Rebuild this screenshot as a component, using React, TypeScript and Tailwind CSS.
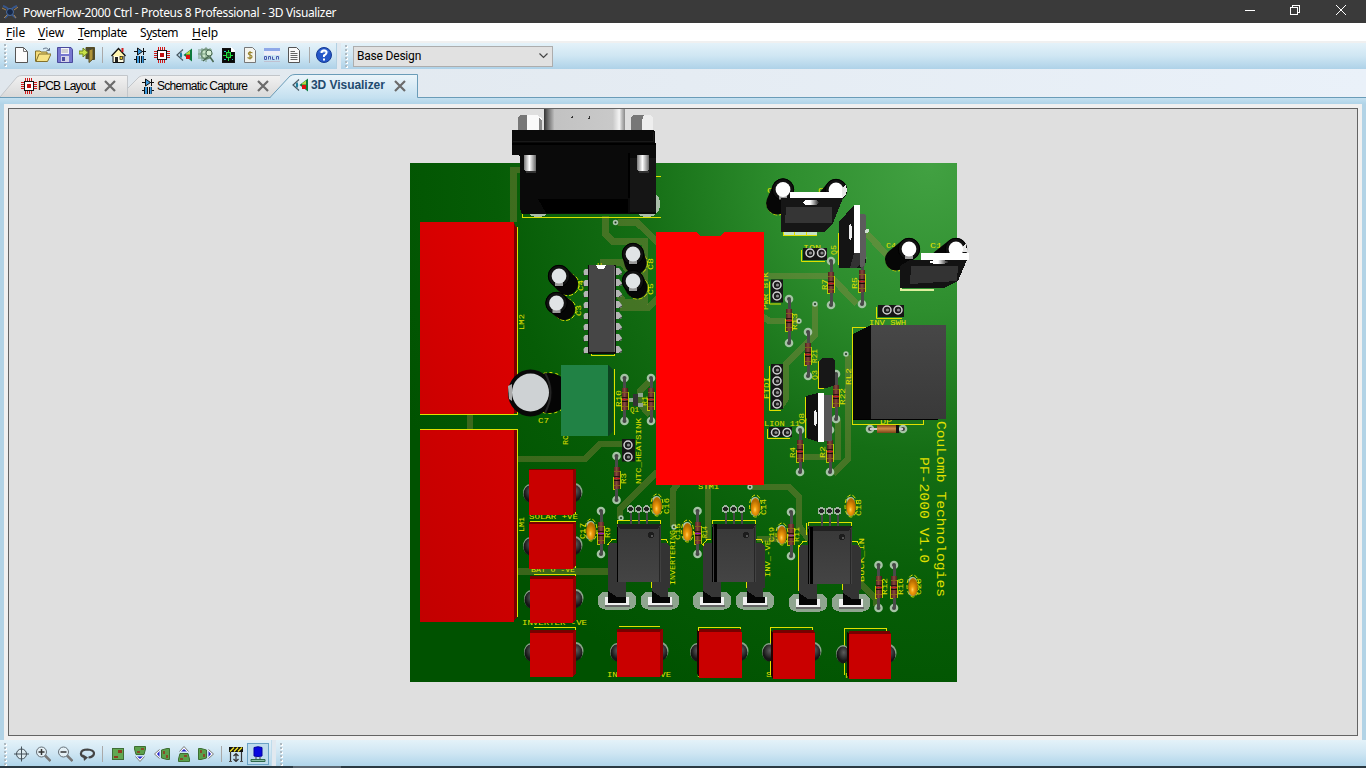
import React from "react";

const SILK = "#e0e000";

/* ---------- board primitives ---------- */

function T({ x, y, len, s = 7.5, r = -90, children }: { x: number; y: number; len: number; s?: number; r?: number; children: string }) {
  return (
    <text
      transform={`translate(${x} ${y}) rotate(${r})`}
      fontSize={s}
      textLength={len}
      lengthAdjust="spacingAndGlyphs"
      fill={SILK}
      fontFamily='"Liberation Mono", monospace'
    >
      {children}
    </text>
  );
}

function Pad({ x, y }: { x: number; y: number }) {
  return (
    <g shapeRendering="auto">
      <circle cx={x} cy={y} r={4.3} fill="#a5c3a5" />
      <circle cx={x} cy={y} r={2} fill="#444" />
    </g>
  );
}

function Resistor({ x, a, b, c, d, band = "#c81c1c" }: { x: number; a: number; b: number; c: number; d: number; band?: string }) {
  return (
    <g>
      <path d={`M${x - 3.5} ${c + 10}V${d}H${x + 1}M${x + 3.5} ${c + 4}V${d}`} stroke={SILK} strokeOpacity={0.8} fill="none" />
      <Pad x={x} y={a} />
      <Pad x={x} y={b} />
      <rect x={x - 1.5} y={a} width={3} height={b - a} fill="#4a4a4a" />
      <rect x={x - 3} y={c} width={6} height={d - c} fill="url(#res)" />
      <rect x={x - 3} y={c + 4} width={6} height={1} fill="#80601c" />
      <rect x={x - 3} y={c + 9} width={6} height={1} fill="#2a1010" />
      <rect x={x - 3} y={c + 11} width={6} height={1} fill={band} />
      <rect x={x - 3} y={c + 13} width={6} height={1} fill="#1c0a0a" />
      <rect x={x - 3} y={d - 4} width={6} height={1} fill="#80601c" />
    </g>
  );
}

function Electro({ x, y, bx, by, top = "#e0e4e6" }: { x: number; y: number; bx: number; by: number; top?: string }) {
  return (
    <g>
      <circle cx={bx + 1} cy={by + 0.5} r={11} fill="none" stroke={SILK} strokeDasharray="4 2" />
      <path d={`M${x} ${y}L${bx} ${by}`} stroke="#060606" strokeWidth={22} strokeLinecap="round" />
      <circle cx={x} cy={y} r={10.7} fill="#111" stroke="#000" />
      <rect x={x - 4} y={y + 6} width={8} height={4} fill="#999" />
      <circle cx={x} cy={y} r={7.4} fill={top} />
    </g>
  );
}

function Pin({ x, y }: { x: number; y: number }) {
  return (
    <g>
      <circle cx={x} cy={y} r={4} fill="#1c1c1c" stroke="#d4d4d4" strokeWidth={1.5} />
      <circle cx={x + 0.5} cy={y} r={1.6} fill="#8d8d8d" />
    </g>
  );
}

function Header({ x, y, w, h, pins, silk = true }: { x: number; y: number; w: number; h: number; pins: number[][]; silk?: boolean }) {
  return (
    <g>
      {silk && <path d={`M${x - 1.5} ${y + 2}V${y + h + 1.5}H${x + w - 2}`} stroke={SILK} fill="none" />}
      <rect x={x} y={y} width={w} height={h} fill="#161616" />
      {pins.map((p) => (
        <Pin key={p.join()} x={p[0]} y={p[1]} />
      ))}
    </g>
  );
}

function Disc({ x, y }: { x: number; y: number }) {
  return (
    <g>
      <ellipse cx={x} cy={y - 1} rx={6} ry={11} fill="none" stroke={SILK} strokeDasharray="4 2" />
      <circle cx={x - 0.5} cy={y - 6} r={4} fill="#a9c4a9" />
      <circle cx={x - 0.5} cy={y + 5} r={4} fill="#8fb08f" />
      <ellipse cx={x} cy={y} rx={4.8} ry={9} fill="url(#disc)" />
    </g>
  );
}

function Mosfet({ dx, dy }: { dx: number; dy: number }) {
  return (
    <g transform={`translate(${dx} ${dy})`}>
      <rect x={598} y={592} width={38} height={17.5} rx={7} fill="#8fa58f" />
      <rect x={641} y={592} width={38} height={17.5} rx={7} fill="#8fa58f" />
      <rect x={605} y={597} width={24} height={8.5} fill="#f0f0f0" />
      <rect x={648} y={597} width={24} height={8.5} fill="#f0f0f0" />
      <path d="M605 605.5H630M648 605.5H673" stroke="#666" strokeWidth={2} />
      <path d="M617 524V520.500H660.500V524M607.500 545L612 539.500H616M661 539.500H666L668 543M651.500 582V588M608.500 583V588" stroke={SILK} fill="none" />
      {[631, 639, 647].map((x) => (
        <g key={x}>
          <path d={`M${x} 509V524`} stroke="#474747" strokeWidth={2.500} />
          <circle cx={x - 0.5} cy={509} r={3} fill="#222" stroke="#a0b4a0" strokeWidth={1.500} />
        </g>
      ))}
      <path d="M608 547L610 543H617V582H626V603H608Z" fill="#363636" />
      <path d="M661 543H667L669.500 546V588H668V603H652V582H661Z" fill="#333" />
      <path d="M608 591L617 597H626V603H608ZM652 591L661 597H670V603H652Z" fill="#050505" />
      <rect x={617} y={524} width={44} height={58} fill="url(#mos)" />
      <path d="M617 524H661L658 529H620Z" fill="#202020" />
      <path d="M617.500 527V582" stroke="#000" strokeWidth={1.500} />
      <path d="M659 527V582" stroke="#262626" />
      <circle cx={651} cy={535} r={3} fill="#1c1c1c" />
      <circle cx={652} cy={536} r={1.300} fill="#555" />
    </g>
  );
}

function RedBox({ x, y, w, h, lb, rb, cy, silk, top = 3, side = "r" }: { x: number; y: number; w: number; h: number; lb: number; rb: number; cy: number; silk: string; top?: number; side?: string }) {
  return (
    <g>
      <path d={silk} stroke={SILK} fill="none" />
      <g shapeRendering="auto">
        <ellipse cx={lb} cy={cy - 1} rx={7} ry={9} fill="#8ca58c" />
        <ellipse cx={rb} cy={cy - 2} rx={7.500} ry={9} fill="#8ca58c" />
        <ellipse cx={lb} cy={cy} rx={6.500} ry={8.500} fill="url(#ball)" />
        <ellipse cx={rb - 0.500} cy={cy - 0.500} rx={7} ry={8.500} fill="url(#ball)" />
      </g>
      {side === "r" ? (
        <path d={`M${x + w} ${y}L${x + w + 2.5} ${y - top}V${y + h - 3}L${x + w} ${y + h}Z`} fill="#8e0000" />
      ) : (
        <path d={`M${x} ${y}L${x - 2} ${y - top}V${y + h - 4}L${x} ${y + h}Z`} fill="#250000" />
      )}
      <path d={`M${x} ${y}V${y - top}H${x + w + (side === "r" ? 2 : -1)}L${x + w} ${y}Z`} fill="#780000" />
      <rect x={x} y={y} width={w} height={h} fill="#c90000" />
    </g>
  );
}

function Via({ x, y }: { x: number; y: number }) {
  return (
    <g shapeRendering="auto">
      <circle cx={x} cy={y} r={2.7} fill="#a9c4a9" />
      <circle cx={x} cy={y} r={1} fill="#163016" />
    </g>
  );
}

function Board() {
  return (
    <svg viewBox="9 109 1348 626" width="1348" height="626" className="block" shapeRendering="crispEdges">
      <defs>
        <radialGradient id="pcb" gradientUnits="userSpaceOnUse" cx="930" cy="165" r="580">
          <stop offset="0" stopColor="#42a142" />
          <stop offset=".25" stopColor="#2e8e2e" />
          <stop offset=".5" stopColor="#156e15" />
          <stop offset=".75" stopColor="#065c06" />
          <stop offset="1" stopColor="#005200" />
        </radialGradient>
        <linearGradient id="redA" x1="0" y1="1" x2="1" y2="0">
          <stop offset="0" stopColor="#cb0000" />
          <stop offset="1" stopColor="#e20000" />
        </linearGradient>
        <linearGradient id="redB" x1="0" y1="1" x2="1" y2="0">
          <stop offset="0" stopColor="#c20000" />
          <stop offset="1" stopColor="#d40000" />
        </linearGradient>
        <linearGradient id="res">
          <stop offset="0" stopColor="#4c1f1b" />
          <stop offset=".5" stopColor="#8a4840" />
          <stop offset="1" stopColor="#4c1f1b" />
        </linearGradient>
        <radialGradient id="disc" cx=".45" cy=".65">
          <stop offset="0" stopColor="#ffd060" />
          <stop offset=".35" stopColor="#f09c0c" />
          <stop offset="1" stopColor="#b86c00" />
        </radialGradient>
        <radialGradient id="ball" cx=".55" cy=".35">
          <stop offset="0" stopColor="#5c5c5c" />
          <stop offset="1" stopColor="#161616" />
        </radialGradient>
        <linearGradient id="mos" x1="0" y1="0" x2="0" y2="1">
          <stop offset="0" stopColor="#383838" />
          <stop offset="1" stopColor="#444444" />
        </linearGradient>
        <linearGradient id="shell">
          <stop offset="0" stopColor="#333" />
          <stop offset=".06" stopColor="#777" />
          <stop offset=".13" stopColor="#c2c2c2" />
          <stop offset=".85" stopColor="#c9c9c9" />
          <stop offset=".93" stopColor="#f4f4f4" />
          <stop offset=".96" stopColor="#c0c0c0" />
          <stop offset="1" stopColor="#8a8a8a" />
        </linearGradient>
        <linearGradient id="screw">
          <stop offset="0" stopColor="#777" />
          <stop offset=".45" stopColor="#fff" />
          <stop offset="1" stopColor="#666" />
        </linearGradient>
        <linearGradient id="hole">
          <stop offset="0" stopColor="#fff" />
          <stop offset=".45" stopColor="#fff" />
          <stop offset="1" stopColor="#222" />
        </linearGradient>
        <linearGradient id="relay" x1="0" y1="0" x2="0" y2="1">
          <stop offset="0" stopColor="#474747" />
          <stop offset="1" stopColor="#393939" />
        </linearGradient>
        <linearGradient id="diode" x1="0" y1="0" x2="0" y2="1">
          <stop offset="0" stopColor="#7a4418" />
          <stop offset=".45" stopColor="#d08a48" />
          <stop offset="1" stopColor="#7a4418" />
        </linearGradient>
      </defs>

      <rect x={410} y={163} width={547} height={519} fill="url(#pcb)" />

      {/* copper traces */}
      <g stroke="#a08848" strokeOpacity={0.36} strokeWidth={6.5} fill="none">
        <path d="M513.500 222V170H522" />
        <path d="M605.500 216V234L613 241.500H645V302H624L618 294" />
        <path d="M618 222.500H637L658 243" />
        <path d="M600 262.500H622L628 270" />
        <path d="M620 308H648L658 298" />
        <path d="M764 276H830L857 304" />
        <path d="M866 233L887 255" />
        <path d="M815 304V335L786 364V398L780 407" />
        <path d="M762 316L769 321H800" />
        <path d="M848 355V459L833 474" />
        <path d="M798 457H838V420" />
        <path d="M517 459H585L600 444H625" />
        <path d="M657 472L620 509V519" />
        <path d="M517 571.500H609" />
        <path d="M682 478L673 490V527M708 485V540" />
        <path d="M752 487H789L799 497V526L809 540" />
        <path d="M757 539H784" />
        <path d="M860 583L876 599V606" />
        <path d="M650 381L640 391V404L650 415" />
        <path d="M470 415V430" />
      </g>
      <Via x={615.5} y={222.5} />
      <Via x={815} y={304} />
      <Via x={799} y={321} />
      <Via x={846} y={354} />
      <Via x={750} y={487} />
      <Via x={621} y={518} />
      <Via x={674} y={527} />

      {/* silkscreen outlines */}
      <path
        d="M522.500 214V217.500H661M656 176.500H661M514 227.500H517.500V414.500H420M420 429.500H517.500V616.500H514M852.500 327.500H873M852.500 327V424.500H923.500V418M591 354V355.500H614V354M614.500 369V435M818.500 361V388.500H824M838.500 233V265M805.500 397V438M806.500 523V535M798.500 545V590.500H803M703.500 545V588.500H708"
        stroke={SILK}
        fill="none"
      />
      <g shapeRendering="auto">
        <T x={524} y={330} len={16}>LM2</T>
        <T x={524} y={532} len={15}>LM1</T>
        <T x={653} y={270} len={12}>C8</T>
        <T x={653} y={295} len={12}>C5</T>
        <T x={583} y={291} len={11}>C4</T>
        <T x={581} y={316} len={11}>C3</T>
        <T x={538} y={422.5} len={11} r={0}>C7</T>
        <T x={568} y={445} len={10}>RC</T>
        <T x={621} y={407} len={17}>R10</T>
        <T x={630} y={411.5} len={9} r={0}>Q1</T>
        <T x={647} y={406} len={10}>R1</T>
        <T x={641} y={484} len={66}>NTC_HEATSINK</T>
        <T x={626} y={484} len={11}>R3</T>
        <T x={669} y={514} len={16}>C16</T>
        <T x={610} y={538} len={11}>R9</T>
        <T x={585} y={539} len={16}>C17</T>
        <T x={675} y={585} len={55}>INVERTERING</T>
        <T x={680} y={540} len={17}>C15</T>
        <T x={707} y={538} len={12}>R14</T>
        <T x={698} y={489} len={21} r={0}>STM1</T>
        <T x={529} y={518.5} len={49} r={0}>SOLAR +VE</T>
        <T x={531} y={571.5} len={44} r={0}>BAT O -VE</T>
        <T x={522} y={624.5} len={65} r={0}>INVERTER -VE</T>
        <T x={607} y={676.5} len={64} r={0}>INVERTER -VE</T>
        <T x={697} y={676.5} len={6} r={0}>S</T>
        <T x={766} y={677} len={6} r={0}>S</T>
        <T x={845} y={677.5} len={6} r={0}>F</T>
        <T x={766} y={515} len={16}>C14</T>
        <T x={774} y={542} len={15}>C19</T>
        <T x={799} y={542} len={15}>R11</T>
        <T x={861} y={516} len={17}>C18</T>
        <T x={887} y={595} len={17}>R12</T>
        <T x={903} y={595} len={17}>R16</T>
        <T x={921} y={595} len={17}>C20</T>
        <T x={864} y={582} len={44}>BUCK_IN</T>
        <T x={770} y={577} len={37}>INV_-VE</T>
        <T x={857} y={289} len={12}>R5</T>
        <T x={827} y={290} len={11}>R7</T>
        <T x={836} y={255} len={10}>Q5</T>
        <T x={803} y={250} len={18} r={0}>ION</T>
        <T x={797} y={330} len={17}>R13</T>
        <T x={817} y={363} len={14}>R21</T>
        <T x={817} y={380} len={10}>Q3</T>
        <T x={845} y={405} len={17}>R22</T>
        <T x={851} y={385} len={17}>RL2</T>
        <T x={804} y={424} len={11}>Q8</T>
        <T x={795} y={458} len={11}>R4</T>
        <T x={825} y={458} len={12}>R2</T>
        <T x={769} y={399} len={22}>FTDI</T>
        <T x={768} y={310} len={38}>PWR BTK</T>
        <T x={869} y={325} len={37} r={0}>INV SWH</T>
        <T x={880} y={424} len={12} r={0}>DP</T>
        <T x={764} y={425.5} len={36} r={0}>LION 11</T>
        <T x={886} y={248} len={10} r={0}>C4</T>
        <T x={930} y={248} len={12} r={0}>C1</T>
        <T x={767} y={193} len={6} r={0}>C</T>
        <T x={818} y={193} len={6} r={0}>C</T>
        <T x={597} y={268} len={5} r={0}>U</T>
        <T x={937} y={421} len={176} s={12.5} r={90}>CouLomb Technologies</T>
        <T x={919.500} y={457} len={106} s={12.5} r={90}>PF-2000 V1.0</T>
      </g>

      {/* D-sub connector */}
      <ellipse cx={656} cy={204} rx={4} ry={9} fill="#a9bda9" />
      <ellipse cx={538} cy={214} rx={8} ry={3} fill="#a9bda9" />
      <ellipse cx={647} cy={214} rx={8} ry={3} fill="#a9bda9" />
      <rect x={544} y={109} width={81} height={22} fill="url(#shell)" />
      <path d="M571 117h1v-1M588 118h1v-2" stroke="#333" fill="none" />
      <path d="M518 117L521 115H527V130H518Z" fill="#777" />
      <path d="M527 115H537L542 118V130H527Z" fill="#fafafa" />
      <path d="M539 118L542 120V130H539Z" fill="#888" />
      <path d="M631 117L634 115H644L642 120V130H631Z" fill="#777" />
      <path d="M644 115H650L653 117V130H642V120Z" fill="#eee" />
      <path d="M512 130H654L655 132V143H656V214H522L520 208V157L519 155H512Z" fill="#0a0a0a" />
      <path d="M512 143.500H656" stroke="#000" strokeWidth={2} />
      <path d="M513 141H653V132" stroke="#191919" fill="none" />
      <rect x={630} y={158} width={26} height={54} fill="#151515" />
      <path d="M538 199H628V213H546Z" fill="#000" />
      <path d="M628.500 153V198" stroke="#000" strokeWidth={2} />
      <path d="M524 155H536V171L533 172H526L524 169Z" fill="url(#screw)" />
      <path d="M637 155H649V170L646 172H639L637 169Z" fill="url(#screw)" />
      <path d="M526 171.500H536M639 171.500H649" stroke="#333" strokeWidth={2} />

      {/* relay bodies on the left */}
      <path d="M513 222L516.500 227V413H513Z" fill="#7c0000" />
      <rect x={420} y={222} width={94} height={191.500} fill="url(#redA)" />
      <path d="M513 430H517V617L513 621Z" fill="#7c0000" />
      <rect x={420} y={430} width={94} height={191.500} fill="url(#redB)" />

      {/* DIP package */}
      {[272, 283, 294, 305, 316, 327, 338, 350].map((y) => (
        <g key={y} shapeRendering="auto">
          <path d={`M583.500 ${y - 1}L585 ${y - 3}H588V${y + 3}H584Z`} fill="#b5b5b5" />
          <path d={`M616 ${y - 4}H619L622 ${y}V${y + 2}L620 ${y + 3}H616Z`} fill="#b5b5b5" />
          <path d={`M583 ${y + 2}L585 ${y + 4}M619 ${y + 3}L622 ${y + 1}`} stroke="#333" />
        </g>
      ))}
      <rect x={588} y={265} width={28} height={89} fill="#0c0c0c" />
      <rect x={589} y={265} width={25} height={87} fill="#464646" />
      <path d="M614.500 266V352" stroke="#6a6a6a" />
      <path d="M596 265H606L604 269H598Z" fill="#fff" />

      <g shapeRendering="auto">
        <Electro x={633} y={254} bx={635.500} by={263} />
        <Electro x={633} y={281} bx={636.500} by={287.500} />
        <Electro x={559} y={276} bx={567} by={284} />
        <Electro x={556.500} y={303} bx={564} by={309} />
        <Electro x={783} y={189.500} bx={777} by={203.500} top="#fff" />
        <Electro x={836} y={190} bx={825} by={203} top="#fff" />
        <Electro x={909} y={249} bx={896} by={259.500} top="#fff" />
        <Electro x={956} y={249} bx={942} by={260} top="#fff" />
        <circle cx={549} cy={393} r={20} fill="#050505" />
        <circle cx={549.5} cy={393} r={20.5} fill="none" stroke={SILK} strokeDasharray="3 3" />
        <ellipse cx={530.500} cy={393} rx={22.500} ry={23.500} fill="#080808" />
        <path d="M545 373Q556 392 545 413" stroke="#252525" strokeWidth={2} fill="none" />
        <path d="M508 386L512 384V401L509 399Z" fill="#aaa" />
        <ellipse cx={530.500} cy={392.500} rx={18.500} ry={19} fill="#ced2d4" />
      </g>

      {/* green terminal */}
      <path d="M608 365L613 370V432L608 436Z" fill="#0c4420" />
      <rect x={561} y={365} width={47} height={71} fill="#218245" />

      {/* voltage regulators */}
      <rect x={784} y={232} width={33} height={3} fill="#c4e4c4" />
      <path d="M783.500 231V235.500H817M794.500 232V235M806.500 232V235" stroke={SILK} fill="none" />
      <path d="M781 198H843L833 223L825 232H781Z" fill="#161616" />
      <path d="M786 207H832V223H785Z" fill="#353535" />
      <rect x={790} y={192} width={52} height={6} fill="#fff" />
      <path d="M842 188L846 184L847 191L845 196L842 198Z" fill="#e8e8e8" />
      <ellipse cx={811} cy={202.500} rx={8} ry={2.800} fill="url(#hole)" />
      <path d="M900.500 286V289.500H934" stroke="#dff0a0" strokeWidth={2} fill="none" />
      <path d="M900 266L910 260H967L958 281L944 288H900Z" fill="#131313" />
      <path d="M911 266H958L957 281L910 284Z" fill="#333" />
      <rect x={921} y={253} width={48} height={7} fill="#fff" />
      <path d="M963 246L966 244L967 252H963Z" fill="#e8e8e8" />
      <ellipse cx={939} cy={262} rx={9} ry={2} fill="url(#hole)" />

      {/* resistors */}
      <Resistor x={831} a={261} b={305} c={272} d={293} />
      <Resistor x={862} a={258} b={304} c={270} d={292} />
      <Resistor x={789} a={299} b={343} c={309} d={331} />
      <Resistor x={808} a={332} b={376} c={343} d={365} />
      <Resistor x={836} a={374} b={419} c={385} d={407} />
      <Resistor x={800} a={430} b={472} c={440} d={462} />
      <Resistor x={830} a={430} b={472} c={440} d={462} />
      <Resistor x={624.500} a={378} b={421} c={388} d={410} />
      <Resistor x={651} a={378} b={421} c={388} d={410} />
      <Resistor x={616.500} a={456} b={500} c={467} d={489} />
      <Resistor x={601} a={511} b={554} c={522} d={544} band="#9a18c0" />
      <Resistor x={697.500} a={511} b={554} c={522} d={544} band="#9a18c0" />
      <Resistor x={791} a={512} b={556} c={524} d={545} band="#9a4890" />
      <Resistor x={878.500} a={565} b={608} c={576} d={598} />
      <Resistor x={894} a={565} b={608} c={576} d={598} />
      <Pad x={870} y={429} />
      <Pad x={903} y={429} />
      <path d="M870 429H903" stroke="#ccc" strokeWidth={2} />
      <rect x={877} y={425} width={22} height={8} fill="url(#diode)" />
      <rect x={896} y={425} width={3} height={8} fill="#111" />

      {/* standing transistors */}
      <path d="M839 222L854 205H860V214L866 216V262L861 268H839Z" fill="#141414" />
      <path d="M860 214H864L866 216V252L865 266L860 267Z" fill="#5c5c5c" />
      <path d="M854 253H860V264L856 268H850Z" fill="#333" />
      <rect x={854} y={205} width={6} height={48} fill="#fff" />
      <ellipse cx={850.500} cy={232} rx={1.800} ry={8} fill="#eee" />
      <circle cx={867} cy={231} r={2} fill="#cfe0cf" />
      <path d="M806 396L818 393V442L807 438Z" fill="#101010" />
      <rect x={824} y={395} width={8} height={46} fill="#555" />
      <rect x={818} y={393} width={6} height={49} fill="#fff" />
      <ellipse cx={815.500} cy={418} rx={1.800} ry={8} fill="#eee" />
      <path d="M819 361L822 358H833L835 361V385L826 388H819Z" fill="#171717" />
      <path d="M638 393H643V397H638ZM638 403H643V407H638ZM629 398H633V402H629Z" fill="#8fa58f" />
      <rect x={633} y={394} width={5} height={12} fill="#333" />

      {/* relay */}
      <path d="M853 334L871 325V420H853Z" fill="#070707" />
      <rect x={871} y={325} width={75} height={94} fill="url(#relay)" />
      <path d="M853 419.500H938" stroke="#000" />

      {/* pin headers */}
      <g shapeRendering="auto">
        <Header x={803} y={248} w={24} h={12} pins={[[810, 253], [821.5, 253]]} />
        <Header x={771} y={279.500} w={12} h={23} pins={[[777, 285], [777, 296]]} />
        <Header x={771} y={364} w={12} h={45} pins={[[777, 370], [777, 381], [777, 392.5], [777, 404]]} />
        <Header x={878} y={305} w={26} h={12} pins={[[887, 310], [898, 310]]} />
        <Header x={769} y={427} w={23} h={10} pins={[[775.5, 432.5], [787, 432.5]]} />
        <Header x={622} y={439} w={13} h={22.500} pins={[[628, 445], [628, 457]]} silk={false} />
        <Disc x={657} y={506} />
        <Disc x={591} y={531} />
        <Disc x={687.500} y={532} />
        <Disc x={755.500} y={507} />
        <Disc x={782} y={535} />
        <Disc x={851} y={507} />
        <Disc x={913} y={587} />
      </g>

      <path d="M656 232H696L700 236H720L724 232H763.500V485H656Z" fill="#ff0000" />

      <Mosfet dx={0} dy={0} />
      <Mosfet dx={95} dy={0} />
      <Mosfet dx={191} dy={2} />
      <path d="M715 524V582M811.500 527V584" stroke="#000" strokeWidth={3} />

      <g>
        <RedBox x={529} y={470} w={44} h={45} lb={530} rb={575} cy={494} top={1} silk="M529 469.500H575.500V514" />
        <RedBox x={529} y={524} w={44} h={45} lb={530} rb={575} cy={547} top={2} silk="M530 521.500H575.500V568" />
        <RedBox x={530} y={579} w={43} h={44} lb={531} rb={576} cy={600} silk="M534 574.500H575.500V620" />
        <RedBox x={530} y={633} w={43} h={44} lb={531} rb={576} cy={653} silk="M534 627.500H575.500V672" />
        <RedBox x={617} y={632} w={43} h={45} lb={617} rb={661} cy={653} silk="M619 626.500H660" />
        <RedBox x={699} y={632} w={42.500} h={45.500} lb={697} rb={741} cy={653} silk="M698.500 650V627.500H740V632" side="n" />
        <RedBox x={773} y={633} w={42} h={46} lb={769} rb={814} cy={653} silk="M770.500 675V627.500H812V631" side="l" />
        <RedBox x={849} y={634} w={42} h={45} lb={843} rb={889} cy={655} silk="M844.500 675V628.500H886V632" side="l" />
      </g>
    </svg>
  );
}

/* ---------- icons ---------- */

function Ico({ children }: { children: React.ReactNode }) {
  return (
    <span className="flex h-[22px] w-[22px] items-center justify-center">
      <svg width="16" height="16" viewBox="0 0 16 16" fill="none" className="block">
        {children}
      </svg>
    </span>
  );
}

const schematic = (
  <g>
    <path d="M2 4.500H14M2 12.500H5M11 12.500H14" stroke="#111" shapeRendering="crispEdges" />
    <path d="M5.500 1V8L10.500 4.500Z" fill="#3a9ae0" stroke="#111" />
    <path d="M11.500 1V8M4.500 9V16M11.500 9V16" stroke="#111" shapeRendering="crispEdges" />
    <rect x="5" y="9" width="2" height="7" fill="#3a9ae0" />
    <path d="M7.500 9V16M9.500 9V16" stroke="#111" shapeRendering="crispEdges" />
    <rect x="10" y="9" width="1.500" height="7" fill="#3a9ae0" />
  </g>
);
const chip = (
  <g shapeRendering="crispEdges">
    <path d="M4.500 0V16M6.500 0V16M8.500 0V16M10.500 0V16M0 4.500H16M0 6.500H16M0 8.500H16M0 10.500H16" stroke="#d01818" />
    <rect x="3.500" y="3.500" width="9" height="9" fill="#fff" stroke="#111" />
    <rect x="6" y="6" width="4" height="4" fill="#c01010" />
  </g>
);
const visual = (
  <g>
    <path d="M7 2.500L1 8L7 13.500" stroke="#44545e" strokeWidth="1.200" />
    <path d="M5.500 3.500Q3.500 8 5.500 12.500" stroke="#7b8d98" />
    <ellipse cx="5" cy="8" rx="1.200" ry="2.500" fill="#1d7d9c" />
    <path d="M7.500 8L16 1.500V14.500Z" fill="#0d7a3c" />
    <path d="M10 6.500L14 3.500V7.500H10Z" fill="#b8d840" />
    <rect x="10" y="8" width="4" height="4" fill="#e01010" />
  </g>
);

const Sep = () => (
  <span className="flex h-[22px] w-[9px] items-center justify-center">
    <span className="h-4 w-px bg-[#a9a9a9]" />
  </span>
);

function Grip() {
  return (
    <span className="flex h-[24px] w-[10px] flex-col items-center justify-between py-[1px]">
      {[0, 1, 2, 3, 4, 5].map((i) => (
        <span key={i} className="h-[2px] w-[2px] bg-[#aebac1] shadow-[1px_1px_0_#fff]" />
      ))}
    </span>
  );
}

function TopTools() {
  return (
    <div className="flex h-[26px] items-center bg-linear-to-b from-[#e4f2f9] via-[#cfe6f3] to-[#aed2e8]">
      <div className="flex h-[26px] items-center pb-[2px]">
        <Grip />
        <Ico>
          <path d="M2.500 .5H10.500L14.500 4.500V15.500H2.500Z" fill="#fcfcfc" stroke="#555" />
          <path d="M10.500 .5V4.500H14.500" stroke="#777" />
        </Ico>
        <Ico>
          <path d="M.5 14.500V4H5L6 5H12V7" fill="#f5dc78" stroke="#82702a" />
          <path d="M1 14.500L4 7H16L12.500 14.500Z" fill="#f7e385" stroke="#82702a" />
          <path d="M8 2Q12 -.5 14 3.500M11.500 3.500H14.500V1" stroke="#64748a" />
        </Ico>
        <Ico>
          <path d="M.5 .5H14L15.500 2.500V15.500H.5Z" fill="#7777cf" stroke="#4a4a9c" />
          <rect x="4" y="1" width="8" height="6" fill="#f4f4fa" />
          <path d="M4.500 3H11M4.500 5H11" stroke="#aaa" />
          <rect x="4" y="9" width="8" height="6" fill="#d4d4e8" />
          <rect x="5" y="10" width="3" height="4" fill="#4d4da0" />
        </Ico>
        <Ico>
          <path d="M7 12V.5H15.500V12.500H13" stroke="#554d25" fill="#4c4b35" />
          <path d="M10 3L14 1.500V12L10 15.500Z" fill="#b09438" stroke="#554d25" />
          <path d="M0 4H4V1L9 5.500L4 10V7H0Z" fill="#c8e14a" stroke="#6d871c" />
        </Ico>
        <Sep />
        <Ico>
          <path d="M3 7V15.500H14V7" fill="#fffbe0" stroke="#111" />
          <path d="M1.500 9L8.500 1.500L15.500 9" fill="#fff5b0" stroke="#111" strokeWidth="1.300" />
          <path d="M12.500 1V5" stroke="#d02020" strokeWidth="2" />
          <path d="M5 15V10H8V15Z" fill="#222" />
          <rect x="10" y="9.500" width="2.500" height="3" fill="#e8c820" stroke="#111" strokeWidth=".7" />
        </Ico>
        <Ico>{schematic}</Ico>
        <Ico>{chip}</Ico>
        <Ico>{visual}</Ico>
        <Ico>
          <circle cx="8" cy="7" r="5" fill="#c8e4c8" stroke="#65806d" strokeWidth="1.500" />
          <path d="M1 2V12M4 1V14M8 0V15M0 7H15M12 1V12M2 3H14M2 11H13" stroke="#70967c" strokeWidth=".9" />
          <circle cx="11" cy="6" r="3" fill="#d5eed5" stroke="#4a6a54" />
          <path d="M12 10L15.500 15M5 14L11 9" stroke="#4a6a54" strokeWidth="1.600" />
        </Ico>
        <Ico>
          <g shapeRendering="crispEdges">
            <path d="M2 1H11L14 4V15H2Z" fill="#080808" stroke="#111" />
            <path d="M11 0V4H14V3L12 1Z" fill="#fff" stroke="#fff" />
            <path d="M3 8.500H6M10 8.500H13M8.500 3V6M8.500 11V14" stroke="#20e040" />
            <rect x="6.500" y="5.500" width="4" height="5" stroke="#20e040" fill="#0a5010" />
            <path d="M4 4.500H6M4 12.500H6M12 12.500H13" stroke="#20c8c8" />
          </g>
        </Ico>
        <Ico>
          <path d="M2.500 .5H10.500L13.500 3.500V15.500H2.500Z" fill="#f4f4ee" stroke="#777" />
          <path d="M10.500 6Q8 4.500 6.500 6Q6 7.500 8 8Q10.500 8.500 9.800 10.500Q8 12 5.500 10.500M8 4V12.500" stroke="#96822a" strokeWidth="1.100" />
        </Ico>
        <Ico>
          <rect x="0" y="1" width="16" height="3" fill="#8ea8e8" />
          <rect x="0" y="4" width="16" height="4" fill="#eeeef8" />
          <path d="M.5 9.500H2.500V12.500H.5ZM4.500 12.500V9.500H6.500V12.500M8.500 9.500V12.500H10.500M12.500 12.500V9.500H14.500V12.500" stroke="#4a5ab0" />
          <path d="M0 14.500H16" stroke="#c0c0d0" />
        </Ico>
        <Ico>
          <path d="M2.500 .5H10.500L13.500 3.500V15.500H2.500Z" fill="#fafafa" stroke="#555" />
          <path d="M4.500 4.500H9M4.500 6.500H11.500M4.500 8.500H11.500M4.500 10.500H11.500M4.500 12.500H11.500" stroke="#666" />
        </Ico>
        <Sep />
        <span className="-ml-px">
          <Ico>
            <circle cx="8" cy="8" r="7.500" fill="#2657c8" stroke="#143a94" />
            <path d="M3 5Q8 -1 13 5Q8 7 3 5" fill="#7ba2ee" opacity=".7" />
            <path d="M5.500 6Q5.500 3.500 8 3.500Q10.800 3.500 10.500 6Q10 7.500 8 8.500V10M8 11.500V13.500" stroke="#fff" strokeWidth="2" />
          </Ico>
        </span>
      </div>
      <span className="ml-[1px] h-full w-px bg-[#b2d0e2]" />
      <span className="h-full w-[4px] bg-[#e1e9f0]" />
      <Grip />
      <div className="ml-[2px] flex h-[21px] w-[200px] items-center justify-between border border-[#adadad] bg-[#e1e1e1] pr-[4px] pl-[3px]">
        <span className="font-[Roboto,sans-serif] text-[12px] leading-none tracking-[-0.2px] text-black">Base Design</span>
        <svg width="9" height="6" viewBox="0 0 9 6" fill="none">
          <path d="M.5 .5L4.500 4.500L8.500 .5" stroke="#444" strokeWidth="1.200" />
        </svg>
      </div>
    </div>
  );
}

const Cone = ({ rot }: { rot: number }) => (
  <g transform={`rotate(${rot} 8 8)`}>
    <path d="M2.500 .5H13.500V3L12 8.500H4L2.500 3Z" fill="#5aa04a" stroke="#3d6e32" />
    <rect x="5" y="5" width="3" height="2" fill="#8a4a28" />
    <rect x="9" y="2" width="3" height="2" fill="#8a4a28" />
    <path d="M3.500 10.500L8 15.500L12.500 10.500" stroke="#777" fill="#fff" />
    <path d="M5 10.500H11L8 13Z" fill="#2424c8" />
  </g>
);

function BottomTools() {
  return (
    <div className="flex h-[26px] items-center bg-linear-to-b from-[#e4f2f9] via-[#cfe6f3] to-[#b0d5ea] pt-[2px]">
      <Grip />
      <Ico>
        <circle cx="8.500" cy="8" r="5" stroke="#445058" fill="#dceaf0" />
        <path d="M8.500 .5V15.500M1 8H16" stroke="#445058" />
      </Ico>
      <Ico>
        <path d="M10 9.500L15.500 15" stroke="#777" strokeWidth="2.500" />
        <circle cx="6.500" cy="6" r="5" stroke="#667078" fill="#e4f0f6" />
        <path d="M6.500 3V9M3.500 6H9.500" stroke="#333" strokeWidth="1.500" />
      </Ico>
      <Ico>
        <path d="M10 9.500L15.500 15" stroke="#777" strokeWidth="2.500" />
        <circle cx="6.500" cy="6" r="5" stroke="#667078" fill="#e4f0f6" />
        <path d="M3.500 6H9.500" stroke="#333" strokeWidth="1.500" />
      </Ico>
      <Ico>
        <path d="M5.500 11Q1.500 10 2 7Q2.500 3.500 8.500 3.500Q15 4 15 7.500Q14.500 11 9.500 11.500" stroke="#444" strokeWidth="2.200" />
        <path d="M4 8.500L9 11.500L5 15Z" fill="#444" />
      </Ico>
      <Sep />
      <Ico>
        <rect x="2.500" y="2.500" width="11" height="11" fill="#62a852" stroke="#3f6e36" />
        <rect x="8" y="4" width="4" height="3" fill="#8e3c20" />
        <rect x="4" y="10" width="4" height="2" fill="#8e3c20" />
      </Ico>
      <Ico><Cone rot={0} /></Ico>
      <Ico><Cone rot={90} /></Ico>
      <Ico><Cone rot={180} /></Ico>
      <Ico><Cone rot={270} /></Ico>
      <Sep />
      <span className="-ml-px flex">
        <Ico>
          <g>
            <rect x="1" y="1" width="14" height="5" fill="#111" />
            <path d="M2 5.500L6 1.500M6 5.500L10 1.500M10 5.500L14 1.500" stroke="#f0e020" strokeWidth="1.500" />
            <path d="M2.500 6V15.500M13.500 6V15.500M8 8V15M5.500 10L8 7.500L10.500 10M5.500 13L8 15.500L10.500 13" stroke="#333" strokeWidth="1.200" />
            <path d="M1 15.500H4M12 15.500H15" stroke="#555" />
          </g>
        </Ico>
        <span className="flex items-center justify-center border border-[#6aa2c4] bg-[#bedcec] [&>span]:h-[20px] [&>span]:w-[20px]">
          <Ico>
            <path d="M4 1.500Q8 0 12 1.500V10Q8 11 4 10Z" fill="#0808e0" stroke="#0404a0" />
            <path d="M6 11V13M10 11V13" stroke="#444" />
            <path d="M1 15.500V13.500H15V15.500Z" fill="#8cc0a8" stroke="#2f6a4c" />
          </Ico>
        </span>
      </span>
      <span className="-mt-[2px] ml-[2px] h-[26px] w-px bg-[#c0dcec]" />
      <span className="-mt-[2px] h-[26px] w-[4px] bg-[#e1e9f0]" />
      <Grip />
    </div>
  );
}

function CloseX() {
  return (
    <svg width="12" height="12" viewBox="0 0 12 12" className="block">
      <path d="M1 1L11 11M11 1L1 11" stroke="#6b6b6b" strokeWidth="2.200" />
    </svg>
  );
}

function Tabs() {
  return (
    <div className="flex h-[29px] items-end border-b border-[#6a9cb8] bg-linear-to-r from-[#e0e7ed] to-[#eaf1f9]">
      <div className="relative h-[22px] w-[128px]">
        <svg width="128" height="22" className="absolute inset-0" fill="none">
          <path d="M0 22L17 2Q19 0 22 0H127V22Z" fill="url(#tabg)" />
          <path d="M0 22L17 2Q19 .5 22 .5H127.500V22" stroke="#c2c6ca" />
          <defs>
            <linearGradient id="tabg" x1="0" y1="0" x2="0" y2="1">
              <stop stopColor="#f2f2f2" />
              <stop offset="1" stopColor="#d9d9d9" />
            </linearGradient>
          </defs>
        </svg>
        <div className="relative flex h-[22px] items-center pl-[18px] font-['Liberation_Sans',sans-serif] text-[12px] text-black">
          <Ico>{chip}</Ico>
          <span className="ml-[-2px] w-[57px] whitespace-nowrap tracking-[-0.8px] [word-spacing:1px]">PCB Layout</span>
          <span className="ml-[9px]"><CloseX /></span>
        </div>
      </div>
      <div className="relative h-[22px] w-[146px]">
        <svg width="153" height="22" className="absolute inset-0" fill="none">
          <path d="M0 13L11 2Q13 0 16 0H152V22H0Z" fill="url(#tabg)" />
          <path d="M0 13L11 2Q13 .5 16 .5H152" stroke="#c2c6ca" />
        </svg>
        <div className="relative flex h-[22px] items-center pl-[9px] font-['Liberation_Sans',sans-serif] text-[12px] text-black">
          <Ico>{schematic}</Ico>
          <span className="ml-[-2px] w-[91px] whitespace-nowrap tracking-[-0.7px]">Schematic Capture</span>
          <span className="ml-[9px]"><CloseX /></span>
        </div>
      </div>
      <div className="relative -mb-px h-[24px] w-[144px]">
        <svg width="148" height="24" className="absolute top-0 -left-[4px]" fill="none">
          <path d="M0 24L20 2Q22 .5 25 .5H147.500V24Z" fill="url(#taba)" />
          <path d="M0 23.500L20 2Q22 .5 25 .5H147.500V23.500" stroke="#6a9cb8" />
          <defs>
            <linearGradient id="taba" x1="0" y1="0" x2="0" y2="1">
              <stop stopColor="#ecf5fa" />
              <stop offset="1" stopColor="#c4e0f0" />
            </linearGradient>
          </defs>
        </svg>
        <div className="relative flex h-[22px] items-center pl-[15px] font-['Liberation_Sans',sans-serif] text-[12px] font-bold text-[#1f4a6e]">
          <Ico>{visual}</Ico>
          <span className="w-[74px] whitespace-nowrap tracking-[-0.05px]">3D Visualizer</span>
          <span className="ml-[9px] mt-[2px]"><CloseX /></span>
        </div>
      </div>
    </div>
  );
}

function MenuItem({ first, rest, w }: { first: string; rest: React.ReactNode; w: string }) {
  return (
    <span className={`whitespace-nowrap ${w}`}>
      <span className="underline underline-offset-2">{first}</span>
      {rest}
    </span>
  );
}

export default function App() {
  return (
    <div className="flex h-[768px] w-[1366px] flex-col overflow-hidden bg-[#f0f0f0] font-['Noto_Sans','Open_Sans',sans-serif]">
      <header className="flex h-[23px] items-center bg-[#3a3a3a] text-white">
        <svg width="16" height="16" viewBox="0 0 16 16" fill="none" className="ml-[2px]">
          <path d="M1 2Q5 3 8 7Q11 3 15 2M3 14Q7 10 8 8Q10 11 14 14" stroke="#36568c" strokeWidth="2" />
          <circle cx="8" cy="8" r="3.500" fill="#162848" stroke="#4d6e9e" />
          <path d="M0 4L4 6M16 3L12 6M2 14L5 11M14 14L12 11" stroke="#a98450" />
        </svg>
        <span className="ml-[5px] pt-[2px] text-[12px] leading-none tracking-[-0.35px] whitespace-nowrap">PowerFlow-2000 Ctrl - Proteus 8 Professional - 3D Visualizer</span>
        <svg width="122" height="23" viewBox="0 0 122 23" fill="none" className="ml-auto mr-[1px] block" shapeRendering="crispEdges">
          <path d="M2 10.500H12" stroke="#fff" />
          <path d="M47.500 7.500H54.500V14.500H47.500ZM49.500 7V5.500H56.500V12.500H55" stroke="#fff" />
          <path d="M93 5L103 15M103 5L93 15" stroke="#fff" shapeRendering="auto" />
        </svg>
      </header>
      <nav className="flex h-[18px] items-center bg-white pt-[2px] pl-[6px] text-[12px] leading-none text-black">
        <MenuItem w="w-[32px]" first="F" rest="ile" />
        <MenuItem w="w-[40px]" first="V" rest="iew" />
        <MenuItem w="w-[62px] tracking-[-0.4px]" first="T" rest="emplate" />
        <span className="w-[52px] tracking-[-0.45px]">S<span className="underline underline-offset-2">y</span>stem</span>
        <MenuItem w="w-[40px]" first="H" rest="elp" />
      </nav>
      <div className="h-[2px] bg-[#f0f0f0]" />
      <TopTools />
      <Tabs />
      <div className="h-[6px] bg-linear-to-b from-[#c4e0f0] to-[#b0d4e8]" />
      <main className="flex h-[636px] border-x-4 border-[#b2d3e6] bg-[#f0f0f0] px-[4px] pt-[4px]">
        <div className="h-[628px] w-[1350px] overflow-hidden border border-[#646464] bg-[#dfdfdf]">
          <Board />
        </div>
      </main>
      <BottomTools />
      <div className="flex h-[2px] bg-[#2b3942]">
        <span className="ml-[293px] w-[48px] bg-[#5a6670]" />
      </div>
    </div>
  );
}
